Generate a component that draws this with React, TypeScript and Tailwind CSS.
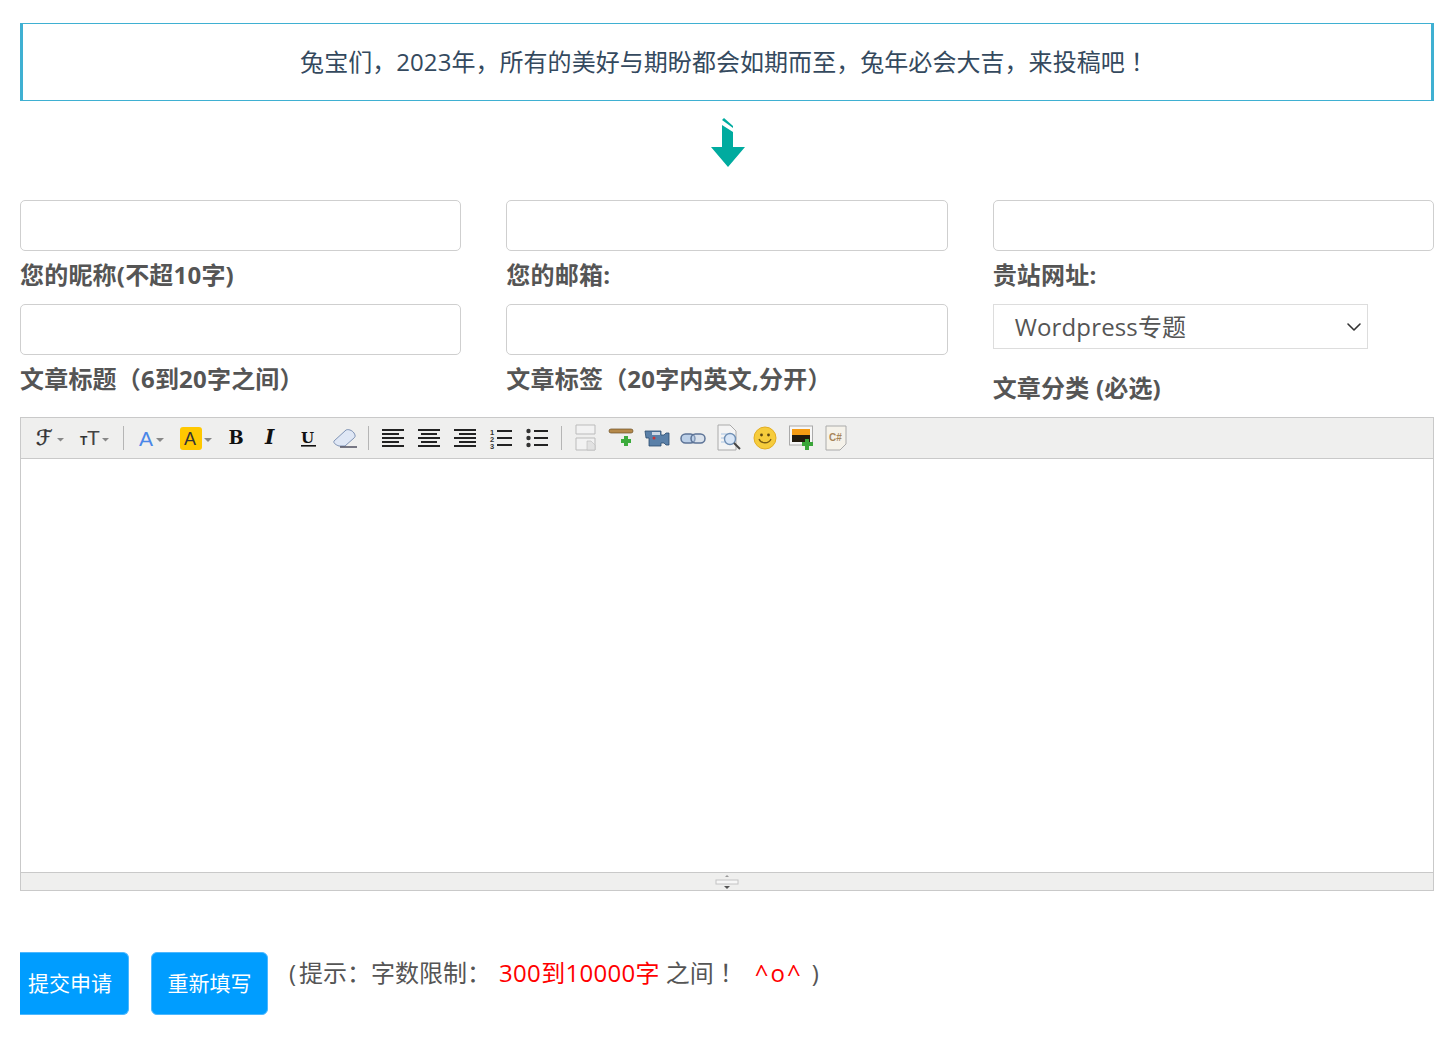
import { ChevronDown } from "lucide-react";
import type { ReactNode } from "react";

const font = "font-['Open_Sans','Noto_Sans_CJK_SC',sans-serif]";

function Field({ label }: { label: string }) {
  return (
    <div className="flex flex-col">
      <input className="h-[51px] w-full rounded-[5px] border border-[#cfcfcf] bg-white" />
      <label className="mt-[8px] h-[45px] text-[24px] leading-[31px] font-bold tracking-[0.2px] text-[#555]">{label}</label>
    </div>
  );
}

function Tool({ w = 36, x = 0, children }: { w?: number; x?: number; children: ReactNode }) {
  return (
    <svg width={w} height="28" viewBox={`0 0 ${w} 28`} className="shrink-0">
      <g transform={`translate(${x} 0)`}>{children}</g>
    </svg>
  );
}

function Lines({ rows }: { rows: [number, number][] }) {
  return (
    <Tool x={13}>
      {rows.map(([x, w], i) => (
        <rect key={i} x={x} y={5 + i * 4} width={w} height="2" fill="#222" />
      ))}
    </Tool>
  );
}

function Toolbar() {
  return (
    <div className="flex h-[41px] items-center border-b border-[#c9c9c9] bg-[#efefee] pl-[10px]">
      <Tool w={38}>
        <text x="5" y="21" fontFamily="DejaVu Sans" fontStyle="italic" fontSize="21" stroke="#333" strokeWidth="0.5" fill="#333">ℱ</text>
        <path d="M26 14h7l-3.5 3.5z" fill="#888" />
      </Tool>
      <Tool w={48}>
        <text x="11" y="21" fontFamily="Liberation Sans" fontWeight="700" fontSize="12" fill="#333">T</text>
        <text x="18" y="21" fontFamily="Liberation Sans" fontSize="21" fill="#444">T</text>
        <path d="M33 14h7l-3.5 3.5z" fill="#888" />
      </Tool>
      <div className="ml-[6px] h-[24px] w-px bg-[#b5b5b5]" />
      <Tool w={48}>
        <text x="15" y="22" fontFamily="Liberation Sans" fontSize="21" fill="#4a86e8">A</text>
        <path d="M32 14h8l-4 4z" fill="#888" />
      </Tool>
      <Tool w={46}>
        <rect x="8" y="3" width="22" height="23" rx="3" fill="#ffc800" />
        <text x="12" y="21" fontFamily="Liberation Sans" fontSize="18" fill="#333">A</text>
        <path d="M32 14h8l-4 4z" fill="#888" />
      </Tool>
      <Tool>
        <text x="10.5" y="20" fontFamily="DejaVu Serif" fontWeight="700" fontSize="18" fill="#111">B</text>
      </Tool>
      <Tool>
        <text x="11" y="20" fontFamily="DejaVu Serif" fontStyle="italic" fontWeight="700" fontSize="20" fill="#111">I</text>
      </Tool>
      <Tool>
        <text x="11" y="19" fontFamily="DejaVu Serif" fontWeight="700" fontSize="15" fill="#111">U</text>
        <rect x="11" y="21" width="15" height="1.6" fill="#111" />
      </Tool>
      <Tool>
        <path d="M8 17L20 6c2-1 6 0 8 3s1 4 0 5l-9 8h-6c-3-1-6-3-5-5z" fill="#dfe7f5" stroke="#7f93b5" />
        <path d="M14 23h17" stroke="#445" strokeWidth="1.4" />
      </Tool>
      <div className="ml-[6px] h-[24px] w-px bg-[#b5b5b5]" />
      <Lines rows={[[0, 22], [0, 17], [0, 22], [0, 17], [0, 22]]} />
      <Lines rows={[[0, 22], [3, 16], [0, 22], [3, 16], [0, 22]]} />
      <Lines rows={[[0, 22], [5, 17], [0, 22], [5, 17], [0, 22]]} />
      <Tool x={13}>
        <text x="0" y="11" fontFamily="Liberation Sans" fontWeight="700" fontSize="7.5" fill="#333">1</text>
        <text x="0" y="18" fontFamily="Liberation Sans" fontWeight="700" fontSize="7.5" fill="#333">2</text>
        <text x="0" y="25" fontFamily="Liberation Sans" fontWeight="700" fontSize="7.5" fill="#333">3</text>
        <path d="M7 7h15M7 14h15M7 21h15" stroke="#222" strokeWidth="1.8" />
      </Tool>
      <Tool x={13}>
        <circle cx="2.5" cy="7" r="2.2" fill="#333" />
        <circle cx="2.5" cy="14" r="2.2" fill="#333" />
        <circle cx="2.5" cy="21" r="2.2" fill="#333" />
        <path d="M8 7h14M8 14h14M8 21h14" stroke="#222" strokeWidth="1.8" />
      </Tool>
      <div className="ml-[12px] h-[24px] w-px bg-[#b5b5b5]" />
      <Tool x={13}>
        <path d="M1 1h19v9H1zM1 14h19v12H1z" fill="#f2f2f2" stroke="#bbb" />
        <path d="M12 17h4l4 4v5h-8z" fill="#e2e2e2" stroke="#bbb" strokeWidth="0.6" />
      </Tool>
      <Tool x={11}>
        <rect x="0" y="5" width="24" height="4" rx="2" fill="#b5894a" stroke="#6b4f24" strokeWidth="0.7" />
        <path d="M15 12h4v3h3v4h-3v3h-4v-3h-3v-4h3z" fill="#3cab3c" />
      </Tool>
      <Tool x={11}>
        <path d="M0 7h16v4h3l2-2h3v12h-3l-2-2h-3v3H4v-8H1z" fill="#5a80a8" stroke="#2c4c6f" strokeWidth="0.8" />
        <rect x="7" y="8" width="8" height="3" fill="#cdd8e5" />
        <circle cx="9" cy="14" r="1.5" fill="#c33" />
      </Tool>
      <Tool x={11}>
        <rect x="0" y="10" width="14" height="9" rx="4.5" fill="#bcd0e8" stroke="#5c7396" strokeWidth="1.5" />
        <rect x="10" y="10" width="14" height="9" rx="4.5" fill="#bcd0e8" fillOpacity="0.4" stroke="#5c7396" strokeWidth="1.5" />
      </Tool>
      <Tool x={11}>
        <path d="M1 1h12l6 6v19H1z" fill="#f4f4f4" stroke="#aaa" />
        <path d="M4 10h6M4 14h5M4 18h5" stroke="#a8c4e4" />
        <circle cx="13" cy="15" r="5.5" fill="#d8e6f7" stroke="#6f8fb5" strokeWidth="1.4" />
        <path d="M17 19l6 6" stroke="#444" strokeWidth="2" />
      </Tool>
      <Tool x={11}>
        <circle cx="12" cy="14" r="11" fill="#f6cc3c" stroke="#e3ad22" />
        <circle cx="8.5" cy="11" r="1.4" fill="#5c4510" />
        <circle cx="15.5" cy="11" r="1.4" fill="#5c4510" />
        <path d="M6 15c2 5 10 5 12 0" fill="none" stroke="#7a5c12" strokeWidth="1.3" />
      </Tool>
      <Tool x={11}>
        <rect x="0.5" y="2" width="23" height="19" fill="#f7f7f7" stroke="#aaa" />
        <rect x="3" y="5" width="18" height="6" fill="#f59b13" />
        <rect x="3" y="11" width="18" height="7" fill="#221a0d" />
        <path d="M16 15h4v3h4v4h-4v4h-4v-4h-3v-4h3z" fill="#39a539" />
      </Tool>
      <Tool x={11}>
        <path d="M1 2h20v18l-6 6H1z" fill="#f5f2ea" stroke="#aaa" />
        <text x="4" y="17" fontFamily="Liberation Sans" fontWeight="700" fontSize="10" fill="#a8865a">C#</text>
      </Tool>
    </div>
  );
}

function Editor() {
  return (
    <div className="mt-[9px] flex h-[474px] flex-col border border-[#c9c9c9] bg-white">
      <Toolbar />
      <div className="flex-1" />
      <div className="flex h-[18px] items-center justify-center border-t border-[#c9c9c9] bg-[#efefee]">
        <svg width="24" height="16" viewBox="0 0 24 16">
          <path d="M10 3h4l-2-2z" fill="#999" />
          <rect x="1" y="6" width="22" height="4" fill="#f7f7f7" stroke="#c4c4c4" />
          <path d="M9 12h6l-3 3z" fill="#555" />
        </svg>
      </div>
    </div>
  );
}

export default function App() {
  return (
    <div className={`${font} h-[1045px] overflow-hidden bg-white pt-[23px] pr-[18px] pl-[20px] text-[#555]`}>
      <div className="flex h-[78px] items-center justify-center border-x-[3px] border-y border-[#3fb0d2] pr-[5px] pb-[2px] text-[24px] tracking-[0.05px] text-[#34495e]">
        <span>
          兔宝们，2023年，所有的美好与期盼都会如期而至，兔年必会大吉，来投稿吧<span className="font-['Noto_Sans_CJK_TC',sans-serif]">！</span>
        </span>
      </div>

      <div className="flex h-[99px] justify-center pt-[17px]">
        <svg width="36" height="50" viewBox="0 0 36 50">
          <path d="M13 2l2-2 9 8v2z" fill="#00ab9f" />
          <path d="M13 7l11 7v15h12L19 49 2 29h11z" fill="#00ab9f" />
        </svg>
      </div>

      <div className="grid grid-cols-3 gap-x-[45px] gap-y-0">
        <Field label="您的昵称(不超10字)" />
        <Field label="您的邮箱:" />
        <Field label="贵站网址:" />
        <Field label="文章标题（6到20字之间）" />
        <Field label="文章标签（20字内英文,分开）" />
        <div>
          <div className="flex h-[45px] w-[375px] items-center justify-between border border-[#ddd] pr-[1px] pl-[21px] text-[24px] tracking-[0.15px] text-[#555]">
            <span>Wordpress专题</span>
            <ChevronDown size={24} strokeWidth={1.6} className="text-[#333]" />
          </div>
          <div className="mt-[23px] text-[24px] leading-[31px] font-bold tracking-[0.2px]">文章分类 (必选)</div>
        </div>
      </div>

      <Editor />

      <div className="mt-[61px] flex items-start">
        <button className="h-[63px] w-[109px] rounded-r-[6px] border border-l-0 border-[#4db8ff] bg-[#009dff] pl-[8px] text-left text-[21px] text-white">提交申请</button>
        <button className="ml-[22px] h-[63px] w-[117px] rounded-[6px] border border-[#4db8ff] bg-[#009dff] text-[21px] text-white">重新填写</button>
        <p className="ml-[21px] text-[24px] leading-[40px] whitespace-nowrap">
          <span className="mr-[3px]">(</span>提示：字数限制：<span className="ml-[8px] tracking-[0.3px] text-[#f00]">300到10000字</span>
          <span className="ml-[6px]">之间</span><span className="font-['Noto_Sans_CJK_TC',sans-serif]">！</span>
          <span className="ml-[17px] tracking-[2px] text-[#f00]">^o^</span>
          <span className="ml-[9px]">)</span>
        </p>
      </div>
    </div>
  );
}
